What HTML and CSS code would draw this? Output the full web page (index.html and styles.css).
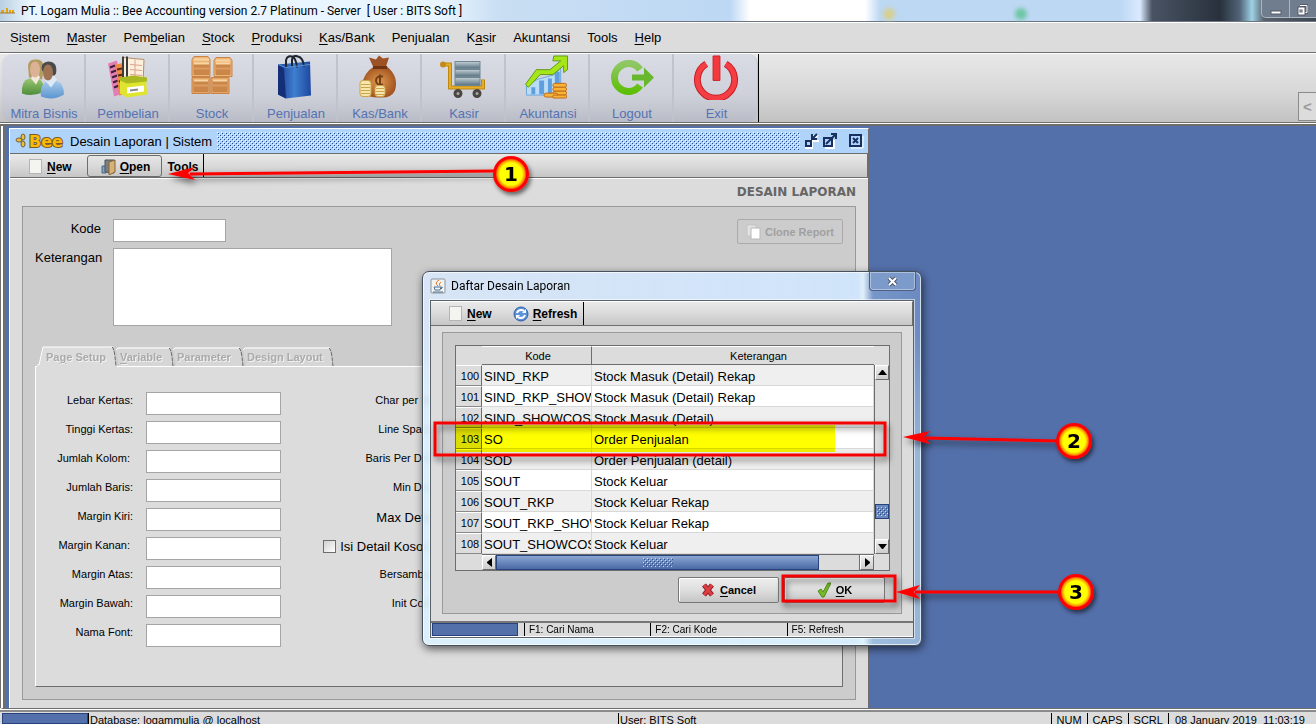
FILE: index.html
```html
<!DOCTYPE html>
<html lang="id">
<head>
<meta charset="utf-8">
<title>PT. Logam Mulia :: Bee Accounting version 2.7 Platinum</title>
<link rel="stylesheet" href="styles.css">
</head>
<body>
<header class="titlebar">
  <svg class="bee-mini" width="15" height="8" viewBox="0 0 15 8"><path d="M1 3h3v3H1zM6 1v5h2V1zM9 3h2v3H9zM12 3h2v3h-2z" fill="#e8a300"/><path d="M0 6h15" stroke="#a67c28"/></svg>
  <h1>PT. Logam Mulia :: Bee Accounting version 2.7 Platinum - Server&nbsp; [ User : BITS Soft ]</h1>
  <i class="glow glow-yellow"></i><i class="glow glow-green"></i>
  <div class="win-buttons">
    <button aria-label="Minimize"><svg width="12" height="14"><rect x="1" y="9" width="10" height="3" fill="#fff" stroke="#555b68"/></svg></button>
    <button aria-label="Restore"><svg width="12" height="14"><path d="M4 3.500h7v7H9" fill="none" stroke="#555b68" stroke-width="3"/><path d="M4 3.500h7v7H9" fill="none" stroke="#fff"/><rect x="2" y="5" width="7" height="8" fill="#fff" stroke="#555b68"/><rect x="4" y="8" width="2" height="2" fill="#fff" stroke="#555b68"/></svg></button>
  </div>
</header>
<nav class="menubar">
  <a href="#">S<u>i</u>stem</a><a href="#"><u>M</u>aster</a><a href="#">Pem<u>b</u>elian</a><a href="#"><u>S</u>tock</a><a href="#"><u>P</u>roduksi</a><a href="#"><u>K</u>as/Bank</a><a href="#">Penjualan</a><a href="#">K<u>a</u>sir</a><a href="#">Akuntansi</a><a href="#">Tools</a><a href="#"><u>H</u>elp</a>
</nav>
<div class="toolbar">
  <div class="tools">
    <button class="tool"><svg width="44" height="44" viewBox="0 0 44 44"><defs><linearGradient id="gr" x2="0" y2="1"><stop stop-color="#9ac674"/><stop offset="1" stop-color="#4d8d38"/></linearGradient><linearGradient id="bl" x2="0" y2="1"><stop stop-color="#a9ccec"/><stop offset="1" stop-color="#5b94cf"/></linearGradient></defs><path d="M7 10Q8 3 15 4Q22 3 23 12L21 24L8 22Z" fill="#b39c62"/><path d="M1 38Q0 25 8 23h9q6 2 6 13Q12 42 1 38Z" fill="url(#gr)"/><path d="M10 23l5 6 4-7-2-4h-5z" fill="#f3e8dd"/><ellipse cx="14" cy="14" rx="5" ry="8" fill="#dbb394"/><path d="M21 15Q19 7 27 6Q37 6 35 18L31 23Z" fill="#4a4a4c"/><path d="M20 41Q18 29 27 25h8q8 3 8 14Q32 46 20 41Z" fill="url(#bl)"/><path d="M24 25l6 7 6-8-3-4h-7z" fill="#dbeaf6"/><ellipse cx="27" cy="17" rx="5" ry="8" fill="#9f7454"/></svg><span>Mitra Bisnis</span></button>
    <button class="tool"><svg width="44" height="44" viewBox="0 0 44 44"><path d="M3 8l9-3 6 33-9 3z" fill="#e37db4"/><path d="M5 12l5-2m-4 7l5-2m-4 7l5-2m-4 7l5-2m-4 7l5-2" stroke="#3b2134" stroke-width="2"/><path d="M11 9l9-2 3 31-9 2z" fill="#f08a3c"/><path d="M12 14l5-1m-4 7l5-1m-4 7l5-1m-4 7l5-1" stroke="#5b2a14" stroke-width="2"/><path d="M18 2l21 2-1 25-20-1z" fill="#fbf0dc" stroke="#b68c68"/><path d="M25 9l12 1M25 14l12 1M25 19l12 1M30 4v22" stroke="#e0a08c"/><path d="M18 1v21M22 1v21" stroke="#3c3c3c" stroke-width="2"/><path d="M15 24l26-3 1 18-20 3-7-4z" fill="#dfe42f"/><path d="M15 22l13-2 14 2v4l-20 2-7-3z" fill="#a9b922"/><path d="M22 32l17-2v6l-17 2z" fill="#fff"/><path d="M25 35l8-1" stroke="#888" stroke-width="2"/></svg><span>Pembelian</span></button>
    <button class="tool"><svg width="44" height="44" viewBox="0 0 44 44"><g stroke="#c98548"><path d="M3 4l2-3h14l2 3v17H3z" fill="#edb678"/><path d="M25 5l2-3h14l2 3v16H25z" fill="#edb678"/><path d="M3 22h18v16H3zM22 22h18v16H22z" fill="#e5a566"/><path d="M5 8h15v11H5zM27 8h14v11H27zM5 25h14v11H5zM24 25h14v11H24z" fill="#cb864a"/></g><path d="M5 4h15M27 5h14M5 8h15M27 8h14M5 25h14M24 25h14" stroke="#f8d5a2" stroke-width="2"/><path d="M5 13h15M27 13h14M5 30h14M24 30h14" stroke="#dd9c60" stroke-width="2"/></svg><span>Stock</span></button>
    <button class="tool"><svg width="44" height="44" viewBox="0 0 44 44"><defs><linearGradient id="bag"><stop stop-color="#1d3f96"/><stop offset=".5" stop-color="#3f7fd0"/><stop offset="1" stop-color="#1c489f"/></linearGradient></defs><path d="M5 9l32-3 1 34-25 3-8-4z" fill="url(#bag)"/><path d="M5 9l6 4 2 30-8-4z" fill="#142f78"/><path d="M13 12V5q1-5 6-4 4 1 5 11M19 11V4q1-5 6-3 5 1 6 10" fill="none" stroke="#202630" stroke-width="2"/><path d="M5 9l8 3 24-3" fill="none" stroke="#5a8fd8"/></svg><span>Penjualan</span></button>
    <button class="tool"><svg width="44" height="44" viewBox="0 0 44 44"><defs><radialGradient id="sack"><stop stop-color="#e39a4f"/><stop offset="1" stop-color="#a35622"/></radialGradient></defs><path d="M16 11L12 2l7 2 3-4 4 3 6-1-3 9z" fill="#9c5225"/><path d="M17 11h13q12 10 8 24-4 8-15 7Q5 43 5 29q2-12 12-18z" fill="url(#sack)"/><path d="M16 12h14" stroke="#6f3413" stroke-width="3"/><path d="M26 21q-7-1-7 4t7 4m-3-10v12" fill="none" stroke="#714017" stroke-width="2"/><g fill="#f6e6ab" stroke="#cba34a"><rect x="3" y="25" width="11" height="16" rx="3"/><rect x="18" y="30" width="10" height="11" rx="3"/></g><path d="M4 29h9m-9 3h9m-9 3h9m-9 3h9m6-5h8m-8 3h8m-8 3h8" stroke="#cba34a"/></svg><span>Kas/Bank</span></button>
    <button class="tool"><svg width="48" height="44" viewBox="0 0 48 44"><defs><linearGradient id="box" x2="0" y2="1"><stop stop-color="#c5d0d5"/><stop offset="1" stop-color="#577180"/></linearGradient></defs><path d="M5 9h6v23h33v-8" fill="none" stroke="#bd8610" stroke-width="4"/><path d="M5 9h6v23h33v-8" fill="none" stroke="#e3ae2c" stroke-width="2"/><circle cx="4" cy="9" r="3" fill="#c48a19"/><g fill="url(#box)" stroke="#708793"><rect x="16" y="6" width="25" height="7"/><rect x="16" y="14" width="25" height="7"/><rect x="16" y="22" width="25" height="8"/></g><circle cx="19" cy="38" r="3" fill="#aaa" stroke="#4b463f" stroke-width="3"/><circle cx="38" cy="38" r="3" fill="#aaa" stroke="#4b463f" stroke-width="3"/></svg><span>Kasir</span></button>
    <button class="tool"><svg width="46" height="46" viewBox="0 0 46 46"><path d="M2 31l11-6 18-5 6-7v28H2z" fill="#badcf6" stroke="#6ba6dc"/><path d="M7 33h4v7H7zm8-7h5v14h-5zm9-2h4v16h-4zm7-7h5v23h-5z" fill="#5f9fe0"/><path d="M1 30l11-15h14L37 6h-8l1-5h14v14l-4 3v-7L29 20H16L4 33z" fill="#a6e51a" stroke="#5c9c12"/><g fill="#f7b43b" stroke="#c26b11"><rect x="29" y="29" width="14" height="4" rx="2"/><rect x="29" y="33" width="14" height="4" rx="2"/><rect x="29" y="37" width="14" height="4" rx="2"/><rect x="20" y="39" width="14" height="4" rx="2"/><rect x="29" y="41" width="14" height="3" rx="1"/></g></svg><span>Akuntansi</span></button>
    <button class="tool"><svg width="46" height="44" viewBox="0 0 46 44"><defs><linearGradient id="lo" x2="0" y2="1"><stop stop-color="#8fc765"/><stop offset="1" stop-color="#5ebf08"/></linearGradient></defs><path d="M32 14A14 14 0 1 0 32 30" fill="none" stroke="url(#lo)" stroke-width="7"/><path d="M24 19h12v-7l10 10-10 10v-7H24z" fill="#67b82d"/></svg><span>Logout</span></button>
    <button class="tool"><svg width="46" height="46" viewBox="0 0 46 46"><path d="M13 9A19 19 0 1 0 33 9" fill="none" stroke="#c51c22" stroke-width="7"/><path d="M13 9A19 19 0 1 0 33 9" fill="none" stroke="#f53e43" stroke-width="5"/><path d="M20 1h7v25h-7z" fill="#f2393e" stroke="#cf2026"/></svg><span>Exit</span></button>
  </div>
  <button class="collapse" aria-label="Collapse">&lt;</button>
</div>
<main class="desktop">
  <section class="frame">
    <header class="frame-title">
      <svg class="logo" width="50" height="18" viewBox="0 0 50 18"><g fill="#f0bc3a" stroke="#6a6238"><ellipse cx="8" cy="5" rx="2" ry="3"/><ellipse cx="4" cy="8" rx="3" ry="2"/><ellipse cx="8" cy="12" rx="2" ry="3"/></g><text x="14" y="15">Bee</text></svg>
      <h2>Desain Laporan | Sistem</h2>
      <svg class="grip" height="18"><defs><pattern id="dots" width="4" height="4" patternUnits="userSpaceOnUse"><path d="M0 0h1v1H0zM2 2h1v1H2z" fill="#fff"/><path d="M1 1h1v1H1zM3 3h1v1H3z" fill="#2c4c88"/></pattern></defs><rect width="100%" height="18" fill="url(#dots)"/></svg>
      <div class="frame-buttons">
        <button aria-label="Iconify"><svg width="14" height="16"><path d="M1 9h6v6H1zM13 2L8 7m0-5v6h6" fill="none" stroke="#fff" stroke-width="2"/><rect x="1" y="8" width="5" height="5" fill="#b0d3fa" stroke="#18305f" stroke-width="2"/><path d="M12 1L8 5M7 1v5h5" fill="none" stroke="#18305f" stroke-width="2"/></svg></button>
        <button aria-label="Maximize"><svg width="14" height="16"><path d="M2 15h9V7" fill="none" stroke="#fff" stroke-width="2"/><rect x="1" y="5" width="8" height="8" fill="#b0d3fa" stroke="#18305f" stroke-width="2"/><path d="M3 11L12 2M8 1h5v5" fill="none" stroke="#18305f" stroke-width="2"/></svg></button>
        <button class="frame-close" aria-label="Close"><svg width="15" height="16"><path d="M2 15h12V3" fill="none" stroke="#fff"/><rect x="1" y="2" width="11" height="11" fill="#b0d3fa" stroke="#18305f" stroke-width="2"/><path d="M4 5l5 5m0-5l-5 5" stroke="#18305f" stroke-width="2"/></svg></button>
      </div>
    </header>
    <div class="bar">
      <button><i class="page"></i><span><u>N</u>ew</span></button>
      <button class="open"><svg width="15" height="16"><path d="M1 7h4v7H1z" fill="#78a5cf" stroke="#526779"/><path d="M4 1h9v13l-9-1z" fill="#7c7f80" stroke="#4f5558"/><path d="M8 3l6-2v12l-6 3z" fill="#d8b274" stroke="#83653a"/></svg><span><u>O</u>pen</span></button>
      <button class="plain">Tools</button>
    </div>
    <div class="frame-body">
      <h3>DESAIN LAPORAN</h3>
      <div class="panel">
        <div class="head-fields">
          <label for="kode">Kode</label><input id="kode" class="kode" type="text">
          <label for="ket">Keterangan</label><textarea id="ket"></textarea>
          <button class="clone" disabled><svg width="15" height="16"><path d="M1 1h9v11H1z" fill="#e2e2e2" stroke="#c4c4c4"/><path d="M5 4h9v11H5z" fill="#fff" stroke="#b8b8b8"/></svg>Clone Report</button>
        </div>
        <div class="tabs" role="tablist">
          <button class="tab page-tab" role="tab" disabled><svg width="80" height="21"><path d="M0 20h2L6 1h70l4 20H0z" fill="#dcdcdc"/><path d="M0 19h2L6 1h70" fill="none" stroke="#fff"/><path d="M75 1q2 1 3 10l1 9" fill="none" stroke="#666" stroke-dasharray="4 1"/></svg><span>Pa<u>g</u>e Setup</span></button>
          <button class="tab var-tab" role="tab" disabled><svg width="58" height="19"><path d="M0 2L2 0h52l4 19H3z" fill="#d6d6d6"/><path d="M0 3L2 1h52" fill="none" stroke="#fff"/><path d="M53 1q2 1 3 9l1 9" fill="none" stroke="#666" stroke-dasharray="4 1"/></svg><span><u>V</u>ariable</span></button>
          <button class="tab par-tab" role="tab" disabled><svg width="71" height="19"><path d="M0 2L2 0h65l4 19H3z" fill="#d6d6d6"/><path d="M0 3L2 1h65" fill="none" stroke="#fff"/><path d="M66 1q2 1 3 9l1 9" fill="none" stroke="#666" stroke-dasharray="4 1"/></svg><span>Parameter</span></button>
          <button class="tab des-tab" role="tab" disabled><svg width="91" height="19"><path d="M0 2L2 0h85l4 19H3z" fill="#d6d6d6"/><path d="M0 3L2 1h85" fill="none" stroke="#fff"/><path d="M86 1q2 1 3 9l1 9" fill="none" stroke="#666" stroke-dasharray="4 1"/></svg><span>Design Layout</span></button>
        </div>
        <div class="tab-panel">
          <div class="setup">
            <label for="f1">Lebar Kertas:</label><input id="f1" type="text"><span>Char per Inch:</span>
            <label for="f2">Tinggi Kertas:</label><input id="f2" type="text"><span>Line Spacing:</span>
            <label for="f3">Jumlah Kolom:&nbsp;</label><input id="f3" type="text"><span>Baris Per Detail:</span>
            <label for="f4">Jumlah Baris:</label><input id="f4" type="text"><span>Min Detail:</span>
            <label for="f5">Margin Kiri:</label><input id="f5" type="text"><span class="large">Max Detail:&nbsp;</span>
            <label for="f6">Margin Kanan:&nbsp;</label><input id="f6" type="text"><label class="large check"><input type="checkbox">Isi Detail Kosong&nbsp;&nbsp;</label>
            <label for="f7">Margin Atas:</label><input id="f7" type="text"><span>Bersambung:</span>
            <label for="f8">Margin Bawah:</label><input id="f8" type="text"><span>Init Code:&nbsp;&nbsp;</span>
            <label for="f9">Nama Font:</label><input id="f9" type="text">
          </div>
        </div>
      </div>
    </div>
  </section>
</main>
<footer class="status">
  <i class="progress"></i><span class="db">Database: logammulia @ localhost</span><span class="user">User: BITS Soft</span><span>NUM</span><span>CAPS</span><span>SCRL</span><span>08 January 2019&nbsp; 11:03:19</span>
</footer>

<section class="dialog" role="dialog" aria-label="Daftar Desain Laporan">
  <header class="dialog-title">
    <svg width="16" height="16"><rect x="1" y="1" width="14" height="14" rx="1" fill="#f2f2ee" stroke="#8b949c"/><path d="M9 2q-5 3-1 6M11 4q-3 2-1 4" fill="none" stroke="#e0782c"/><path d="M4 9h7l-1 3H5zM11 9q3 0 0 2M3 14h10" fill="none" stroke="#4c6f96"/></svg>
    <h2>Daftar Desain Laporan</h2>
    <button class="dialog-close" aria-label="Close"><svg width="14" height="11"><path d="M3 2l7 7m0-7l-7 7" stroke="#4c5870" stroke-width="4"/><path d="M3 2l7 7m0-7l-7 7" stroke="#fff" stroke-width="2"/></svg></button>
  </header>
  <div class="client">
    <div class="bar dialog-bar">
      <button><i class="page"></i><span><u>N</u>ew</span></button>
      <button class="refresh"><svg width="16" height="16"><circle cx="8" cy="8" r="7" fill="#5b93d8" stroke="#315da8"/><path d="M4 7q1-3 4-3 2 0 3 1M12 9q-1 3-4 3-2 0-3-1" fill="none" stroke="#fff" stroke-width="2"/><path d="M13 3v4H9zM3 13V9h4z" fill="#fff"/></svg><span><u>R</u>efresh</span></button>
    </div>
    <div class="dialog-panel">
      <div class="grid">
        <table>
          <colgroup><col class="c-no"><col class="c-kode"><col></colgroup>
          <thead><tr><th></th><th>Kode</th><th class="h-ket">Keterangan</th></tr></thead>
          <tbody>
            <tr><th>100</th><td>SIND_RKP</td><td>Stock Masuk (Detail) Rekap</td></tr>
            <tr><th>101</th><td>SIND_RKP_SHOW</td><td>Stock Masuk (Detail) Rekap</td></tr>
            <tr><th>102</th><td>SIND_SHOWCOST</td><td>Stock Masuk (Detail)</td></tr>
            <tr><th>103</th><td>SO</td><td>Order Penjualan</td></tr>
            <tr><th>104</th><td>SOD</td><td>Order Penjualan (detail)</td></tr>
            <tr><th>105</th><td>SOUT</td><td>Stock Keluar</td></tr>
            <tr><th>106</th><td>SOUT_RKP</td><td>Stock Keluar Rekap</td></tr>
            <tr><th>107</th><td>SOUT_RKP_SHOW</td><td>Stock Keluar Rekap</td></tr>
            <tr><th>108</th><td>SOUT_SHOWCOS</td><td>Stock Keluar</td></tr>
          </tbody>
        </table>
        <div class="vscroll">
          <button aria-label="Scroll up"><svg width="9" height="5"><path d="M0 5L4 0h1l4 5z"/></svg></button>
          <i class="v-thumb"><svg width="11" height="9"><rect width="11" height="9" fill="url(#bumps)"/></svg></i>
          <button aria-label="Scroll down"><svg width="9" height="5"><path d="M0 0l4 5h1l4-5z"/></svg></button>
        </div>
        <div class="hscroll">
          <button aria-label="Scroll left"><svg width="5" height="9"><path d="M5 0L0 4v1l5 4z"/></svg></button>
          <div class="h-track"><i class="h-thumb"><svg width="30" height="9"><defs><pattern id="bumps" width="4" height="4" patternUnits="userSpaceOnUse"><path d="M0 0h1v1H0zM2 2h1v1H2z" fill="#c5dcf8"/><path d="M1 1h1v1H1zM3 3h1v1H3z" fill="#2c4c88"/></pattern></defs><rect width="30" height="9" fill="url(#bumps)"/></svg></i></div>
          <button aria-label="Scroll right"><svg width="5" height="9"><path d="M0 0l5 4v1L0 9z"/></svg></button>
        </div>
        <i class="marker"></i>
      </div>
      <div class="actions">
        <button><svg width="14" height="14"><path d="M3 2l8 10m0-10L3 12" stroke="#8f1c22" stroke-width="5"/><path d="M3 2l8 10m0-10L3 12" stroke="#dc3c42" stroke-width="3"/></svg><span><u>C</u>ancel</span></button>
        <button><svg width="14" height="16"><path d="M1 9l3-2 2 3 5-9h3L7 15H5z" fill="#75b927" stroke="#4f8b1a"/></svg><span><u>O</u>K</span></button>
      </div>
    </div>
    <footer class="dialog-status"><i class="progress"></i><span>F1: Cari Nama</span><span class="wide">F2: Cari Kode</span><span>F5: Refresh</span></footer>
  </div>
</section>

<svg class="notes" aria-hidden="true">
  <defs>
    <filter id="sh" x="-20%" y="-20%" width="150%" height="150%"><feDropShadow dx="2" dy="3" stdDeviation="2" flood-color="#000" flood-opacity=".55"/></filter>
    <filter id="shl" filterUnits="userSpaceOnUse" x="0" y="0" width="1316" height="724"><feDropShadow dx="2" dy="4" stdDeviation="3" flood-color="#000" flood-opacity=".55"/></filter>
    <radialGradient id="disc"><stop offset=".62" stop-color="#ff0"/><stop offset=".78" stop-color="#ff8c00"/><stop offset=".86" stop-color="#f00"/></radialGradient>
  </defs>
  <g filter="url(#shl)" fill="red" stroke="red">
    <path d="M190 174L495 171" stroke-width="3"/><path d="M168 174l27-7-7 6 7 7z" stroke="none"/>
    <path d="M925 438l134 3" stroke-width="3"/><path d="M903 437l27-6-6 6 6 7z" stroke="none"/>
    <path d="M915 592h145" stroke-width="3"/><path d="M896 592l24-7-6 7 6 7z" stroke="none"/>
    <path d="M435 423h450v32H435zM783 576h112v25H783z" fill="none" stroke="#f40000" stroke-width="3"/>
  </g>
  <g filter="url(#sh)"><circle cx="511" cy="174" r="18" fill="url(#disc)"/><circle cx="1074" cy="441" r="18" fill="url(#disc)"/><circle cx="1076" cy="592" r="18" fill="url(#disc)"/></g>
  <g class="digits"><text x="511" y="181">1</text><text x="1074" y="448">2</text><text x="1076" y="599">3</text></g>
</svg>
</body>
</html>
```
FILE: styles.css
```css
* { box-sizing: border-box; }
body { margin: 0; height: 100vh; display: flex; flex-direction: column; overflow: hidden; position: relative; background: #dcdcdc; color: #000; font: 13px "Liberation Sans", Arial, sans-serif; }
h1, h2, h3 { margin: 0; font-weight: normal; }
button { font: inherit; color: inherit; margin: 0; padding: 0; border: 0; background: none; display: flex; align-items: center; justify-content: center; }
input, textarea { margin: 0; border: 1px solid #a5a5a5; background: #fff; border-radius: 0; padding: 2px; resize: none; font: inherit; }
svg { display: block; flex: none; }
u { text-underline-offset: 2px; }

.titlebar { position: relative; flex: none; height: 23px; display: flex; align-items: center; gap: 6px; border-bottom: 1px solid #fff; box-shadow: inset 0 -1px #6d7680; overflow: hidden;
  background: linear-gradient(90deg, #b9cfe2 0, #eaf5fd 30px, #e9f5ff 440px, #c9def3 500px, #bdd8f4 730px, #fff 750px, #fff 865px, #bdd8f3 880px, #bdd8f3 1120px, #dbeaff 1140px, #495363 1152px, #28313c 1220px, #53657a 1240px, #9fd1e5 1252px, #59616c 1264px, #3c4552 100%); }
.titlebar h1 { font: 12px/20px Roboto, "Noto Sans", sans-serif; flex: 1; white-space: nowrap; }
.glow { position: absolute; width: 12px; height: 12px; top: 8px; border-radius: 50%; filter: blur(2px); }
.glow-yellow { left: 883px; background: #d6cf90; }
.glow-green { left: 1015px; background: #6cc6a3; }
.win-buttons { display: flex; align-self: flex-start; height: 18px; margin-right: -10px; border: 1px solid #aab6c2; border-top: 0; border-radius: 0 0 5px 5px; background: #6f7d8e; }
.win-buttons button { width: 27px; }
.win-buttons button + button { width: 36px; padding-right: 12px; border-left: 1px solid #aab6c2; }

.menubar { flex: none; display: flex; align-items: center; gap: 1px; height: 30px; padding: 0 2px; border-bottom: 1px solid #6d6d6d; }
.menubar a { padding: 0 8px; color: #000; text-decoration: none; }

.toolbar { flex: none; height: 73px; display: flex; align-items: stretch; padding-left: 2px; border-top: 1px solid #fff; border-bottom: 2px solid #6d6d6d; background: linear-gradient(#e8e8e8, #d9d9d9 50%, #c1c1c1); box-shadow: inset 0 -1px #fff, inset 0 -2px #6d6d6d; }
.tools { display: flex; margin-bottom: 2px; border-right: 1px solid #000; }
.tool { width: 84px; flex-direction: column; justify-content: space-between; padding: 1px 0 0; color: #5473b3; border-right: 2px solid #c1c3cb; background: linear-gradient(#dadce5, #cfd1da 60%, #b9bbc6); }
.tool:first-child { border-radius: 10px 0 0 10px; }
.tool:last-child { border-radius: 0 10px 10px 0; border-right-width: 1px; }
.tool svg { height: 45px; }
.tool span { line-height: 17px; padding-left: 2px; }
.collapse { width: 18px; height: 29px; margin: auto 0 3px auto; border: 1px solid #8b8b8b; border-right: 0; background: #dcdcdc; color: #9b9b9b; font-weight: bold; font-size: 15px; }

.desktop { flex: 1; min-height: 0; position: relative; background: #5470aa; border-left: 3px solid #fff; box-shadow: inset 2px 0 #6d6d6d; border-bottom: 1px solid #6d6d6d; }
.desktop::before { content: ""; position: absolute; left: -3px; top: 0; bottom: 0; width: 1px; background: #6d6d6d; }
.frame { position: absolute; left: 6px; top: 2px; bottom: 0; width: 860px; max-width: 100%; display: flex; flex-direction: column; border: 1px solid #fff; border-right-color: #6d6d6d; border-bottom: 0; background: #dcdcdc; }
.frame-title { flex: none; height: 25px; display: flex; align-items: center; padding: 0 4px 0 5px; gap: 5px; background: #b0d3fa; border-bottom: 1px solid #6d6d6d; }
.frame-title h2 { font-size: 13px; }
.logo text { font: bold 16px "DejaVu Sans", Verdana, sans-serif; fill: #f9b80a; stroke: #7a5a28; stroke-width: 2px; paint-order: stroke; }
.grip { flex: 1; min-width: 0; }
.frame-buttons { display: flex; gap: 4px; }
.frame-close { margin-left: 8px; }

.bar { flex: none; height: 24px; display: flex; align-items: stretch; border-right: 1px solid #6d6d6d; border-bottom: 1px solid #6d6d6d; background: linear-gradient(#e9e9e9, #dadada 50%, #c6c6c6); font-weight: bold; font-size: 12px; }
.bar button { gap: 5px; padding: 2px 15px 0 19px; }
.page { width: 13px; height: 15px; border: 1px solid #b5b5b5; background: #f4f4f0; }
.bar .open { padding: 1px 11px 0 13px; border: 1px solid #6d6d6d; border-radius: 3px; gap: 4px; margin-top: 1px; }
.bar .plain { padding: 2px 5px 0; border-right: 1px solid #000; }

.frame-body { flex: 1; min-height: 0; display: flex; flex-direction: column; padding: 0 12px 8px; border-top: 1px solid #fff; }
.frame-body h3 { font: bold 12px/27px "DejaVu Sans", Verdana, sans-serif; color: #666; text-align: right; }
.panel { flex: 1; min-height: 0; display: flex; flex-direction: column; padding: 12px; border: 1px solid #999; background: #ccc; }
.head-fields { display: grid; grid-template-columns: 66px 279px 1fr; column-gap: 12px; row-gap: 6px; }
.head-fields label { text-align: right; line-height: 20px; }
.kode { width: 113px; height: 23px; }
.head-fields textarea { height: 78px; }
.clone { grid-column: 3; grid-row: 1; justify-self: end; width: 106px; height: 25px; margin-bottom: -2px; gap: 4px; border: 1px solid #aaa; border-radius: 2px; color: #a0a0a0; font-weight: bold; font-size: 11px; }
.tabs { display: flex; align-items: flex-end; margin: 20px 0 -1px 2px; }
.tab { position: relative; z-index: 1; height: 20px; justify-content: flex-start; padding-left: 4px; font-size: 11px; font-weight: bold; color: #aaa; text-shadow: 1px 1px #f2f2f2; }
.tab svg { position: absolute; left: 0; bottom: 0; }
.tab span { position: relative; white-space: nowrap; }
.page-tab { width: 79px; height: 21px; padding-left: 9px; }
.var-tab { width: 57px; } .par-tab { width: 70px; } .des-tab { width: 90px; }
.tab:not(.page-tab) svg { bottom: 1px; }
.tab-panel { flex: 1; min-height: 0; padding: 25px 0 0; border: 1px solid #fff; border-right-color: #6d6d6d; border-bottom-color: #6d6d6d; background: #dcdcdc; }
.setup { display: grid; grid-template-columns: 97px 135px 151px; grid-auto-rows: 23px; row-gap: 6px; column-gap: 13px; font-size: 11px; line-height: 17px; text-align: right; white-space: nowrap; }
.setup .large { font-size: 13px; line-height: 20px; }
.check { display: flex; justify-content: flex-end; align-items: flex-start; gap: 4px; }
.check input { appearance: none; width: 13px; height: 13px; margin-top: 3px; padding: 0; border: 1px solid #6d6d6d; background: linear-gradient(135deg, #d0d0d0, #fff); }

.status { flex: none; height: 15px; display: flex; align-items: stretch; border-top: 1px solid #fff; box-shadow: inset 0 2px #8b8b8b; padding-top: 3px; font-size: 11px; line-height: 14px; white-space: nowrap; }
.status span { padding: 0 5px; border-left: 1px solid #000; }
.progress { background: #5470aa; border: 1px solid #26437e; }
.status .progress { width: 86px; margin-left: 2px; }
.status .db { width: 530px; padding-left: 1px; }
.status .user { flex: 1; padding-left: 1px; }
.status span:last-child { padding: 0 11px 0 6px; }

.dialog { position: absolute; left: 422px; top: 271px; width: 500px; display: flex; flex-direction: column; padding: 0 7px 7px; border: 1px solid #46515e; border-radius: 7px; box-shadow: inset 0 0 0 1px #ffffffb0, 1px 3px 9px #0009; background: linear-gradient(#0000 60px, #dffcff60 180px), linear-gradient(90deg, #d9eaffd0 0, #d0e6ffe8 435px, #e1f3ffdd 440px, #7fa0d0cc 450px, #7799ccaa 100%); backdrop-filter: blur(3px); }
.dialog-title { height: 28px; display: flex; align-items: center; gap: 5px; }
.dialog-title h2 { flex: 1; font: 12px/18px Roboto, "Noto Sans", sans-serif; }
.dialog-close { align-self: flex-start; width: 47px; height: 19px; margin-right: -2px; border: 1px solid #4d5f84; border-top: 0; border-radius: 0 0 4px 4px; box-shadow: inset 0 0 0 1px #ffffff60; background: #7c9bcb; }
.client { display: flex; flex-direction: column; border: 1px solid #59616b; background: #dcdcdc; outline: 1px solid #ffffff90; }
.dialog-bar { height: 25px; border-top: 1px solid #fff; }
.dialog-bar button { padding: 0 15px 0 18px; }
.dialog-bar .refresh { padding: 0 6px; border-right: 1px solid #000; gap: 4px; }
.dialog-panel { display: flex; flex-direction: column; gap: 6px; margin: 6px 11px 7px; padding: 12px 11px 10px 12px; border: 1px solid #999; background: #ccc; }
.grid { position: relative; display: grid; grid-template-columns: 1fr 15px; border: 1px solid #6d6d6d; background: #dcdcdc; }
table { width: 100%; table-layout: fixed; border-collapse: separate; border-spacing: 0; }
.c-no { width: 26px; } .c-kode { width: 110px; }
th { font-weight: normal; font-size: 11px; background: #dcdcdc; padding: 0; border-right: 1px solid #6d6d6d; border-bottom: 1px solid #8a8a8a; }
thead th { height: 19px; padding-left: 3px; border-color: #6d6d6d; border-top: 1px solid #fff; }
thead th:first-child { border-color: #dcdcdc; }
thead .h-ket { padding-left: 51px; border-right: 0; }
tbody th { border-top: 1px solid #fff; padding-left: 3px; }
tbody tr { height: 21px; background: #fff; }
tbody tr:nth-child(odd) { background: #efefef; }
td { height: 21px; padding: 3px 0 0 2px; border-right: 1px solid #d8d8d8; border-bottom: 1px solid #d8d8d8; overflow: hidden; white-space: nowrap; }
.vscroll { display: flex; flex-direction: column; margin-top: 19px; border-left: 1px solid #6d6d6d; }
.vscroll button, .hscroll button { flex: none; width: 14px; height: 15px; border: 1px solid #6d6d6d; border-top-color: #fff; border-left-color: #fff; background: linear-gradient(#eee, #ccc); }
.v-thumb { margin-top: auto; margin-bottom: 20px; height: 15px; display: flex; align-items: center; justify-content: center; border: 1px solid #26437e; background: #6b88bf; }
.hscroll { grid-column: 1 / -1; display: flex; height: 16px; margin: 0 15px 0 26px; border-top: 1px solid #6d6d6d; }
.h-track { flex: 1; border-right: 1px solid #6d6d6d; }
.h-thumb { width: calc(100% - 40px); height: 15px; display: flex; align-items: center; justify-content: center; border: 1px solid #26437e; background: linear-gradient(#8ba7d3, #4a69a5); }
.marker { position: absolute; left: 0; right: 54px; top: 79px; height: 27px; background: #ff0; mix-blend-mode: multiply; }
.actions { display: flex; justify-content: flex-end; gap: 5px; padding-right: 5px; font-size: 11px; font-weight: bold; }
.actions button { width: 101px; height: 26px; gap: 5px; border: 1px solid #777; border-radius: 2px; background: linear-gradient(#eee, #dedede 50%, #c5c5c5); box-shadow: inset 1px 1px #fff; }
.dialog-status { display: flex; height: 16px; border-top: 2px solid #777; border-bottom: 1px solid #fff; font-size: 10px; line-height: 14px; }
.dialog-status .progress { width: 87px; margin: 0 6px 0 1px; }
.dialog-status span { width: 128px; padding-left: 4px; border-left: 1px solid #000; }
.dialog-status .wide { width: 138px; }

.notes { position: absolute; left: 0; top: 0; width: 100%; height: 100%; pointer-events: none; }
.digits { font: bold 20px "DejaVu Sans", Verdana, sans-serif; text-anchor: middle; }
```
